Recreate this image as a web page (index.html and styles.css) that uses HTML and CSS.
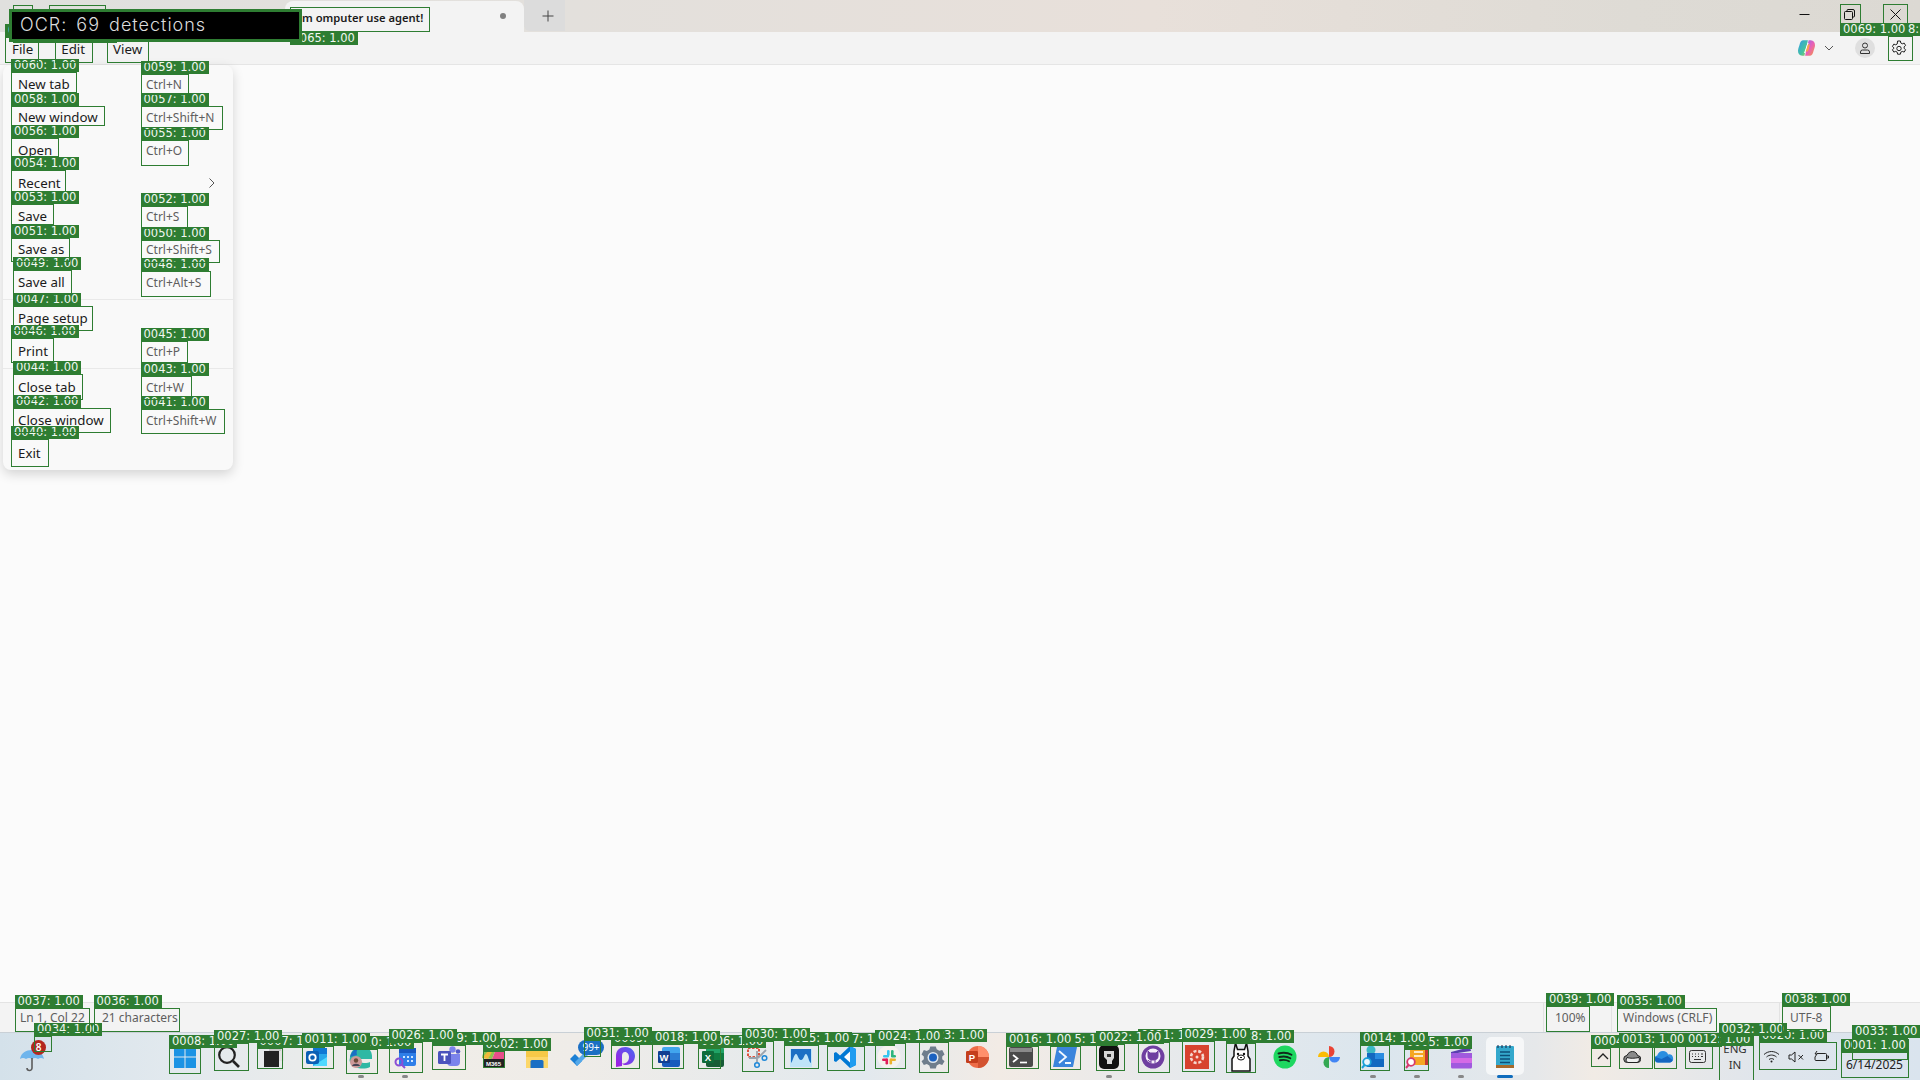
FILE: index.html
```html
<!DOCTYPE html>
<html lang="en">
<head>
<meta charset="utf-8">
<title>Notepad</title>
<link rel="stylesheet" href="styles.css">
</head>
<body>
<div class="app">
  <header class="titlebar">
    <div class="tab"><span class="tab-title">m omputer use agent!</span><span class="tab-dot"></span></div>
    <div class="newtab"><svg width="12" height="12" viewBox="0 0 12 12"><path d="M6 .5v11M.5 6h11" stroke="#444" fill="none"/></svg></div>
    <div class="winctrls">
      <span class="winbtn"><svg width="11" height="11" viewBox="0 0 11 11"><path d="M.5 5.5h10" stroke="#111" fill="none"/></svg></span>
      <span class="winbtn"><svg width="11" height="11" viewBox="0 0 11 11"><path d="M3 2V1.500A1 1 0 0 1 4 .5h5A1.500 1.500 0 0 1 10.500 2v5a1 1 0 0 1-1 1H9M1.500 2.500h6a1 1 0 0 1 1 1v6a1 1 0 0 1-1 1h-6a1 1 0 0 1-1-1v-6a1 1 0 0 1 1-1z" stroke="#111" fill="none"/></svg></span>
      <span class="winbtn"><svg width="11" height="11" viewBox="0 0 11 11"><path d="M.5.5l10 10M10.500.5l-10 10" stroke="#111" fill="none"/></svg></span>
    </div>
  </header>
  <nav class="menubar">
    <span class="menu-item">File</span><span class="menu-item">Edit</span><span class="menu-item">View</span>
    <div class="toolbar">
      <svg class="copilot" width="17" height="16" viewBox="0 0 24 22"><defs><linearGradient id="cpa" x1="0" y1="0" x2="1" y2="1"><stop offset="0" stop-color="#2f9be8"/><stop offset=".6" stop-color="#45c2a0"/><stop offset="1" stop-color="#b6d34a"/></linearGradient><linearGradient id="cpb" x1="0" y1="0" x2="1" y2="1"><stop offset="0" stop-color="#8a6cf0"/><stop offset=".5" stop-color="#e85fb8"/><stop offset="1" stop-color="#f59a3c"/></linearGradient></defs><path d="M7 0h7L9 22H6C2 22 0 19 0 15c0-2 1-5 2-8 1-4 2-7 5-7z" fill="url(#cpa)"/><path d="M17 22h-7L15 0h3c4 0 6 3 6 7 0 2-1 5-2 8-1 4-2 7-5 7z" fill="url(#cpb)"/><path d="M15 4l-5 14h-1.500l5-14z" fill="#fff"/><path d="M14 6l-3 10h3l3-10z" fill="#f7a34a"/></svg>
      <svg class="chev" width="10" height="6" viewBox="0 0 10 6"><path d="M1 1l4 4 4-4" stroke="#555" fill="none"/></svg>
      <span class="avatar"><svg width="12" height="12" viewBox="0 0 12 12"><circle cx="6" cy="3.500" r="2.500" stroke="#333" fill="none"/><path d="M1.500 11.500V10a2 2 0 0 1 2-2h5a2 2 0 0 1 2 2v1.500z" stroke="#333" fill="none"/></svg></span>
      <svg class="gear" width="16" height="16" viewBox="0 0 16 16"><path d="M6.600 1h2.800l.4 2 1.500.8 1.900-.7 1.400 2.400-1.500 1.300v1.600l1.500 1.300-1.400 2.400-1.900-.7-1.500.8-.4 2H6.600l-.4-2-1.500-.8-1.900.7-1.400-2.400 1.500-1.300V7.800L1.400 6.500l1.400-2.400 1.900.7 1.500-.8z" stroke="#222" fill="none"/><circle cx="8" cy="8.500" r="2.200" stroke="#222" fill="none"/></svg>
    </div>
  </nav>
  <main class="editor">
    <div class="filemenu">
      <div class="row"><span>New tab</span><span class="key">Ctrl+N</span></div>
      <div class="row"><span>New window</span><span class="key">Ctrl+Shift+N</span></div>
      <div class="row"><span>Open</span><span class="key">Ctrl+O</span></div>
      <div class="row"><span>Recent</span><span class="arrow"><svg width="6" height="10" viewBox="0 0 6 10"><path d="M.5.500l4.500 4.500-4.500 4.500" stroke="#555" fill="none"/></svg></span></div>
      <div class="row"><span>Save</span><span class="key">Ctrl+S</span></div>
      <div class="row"><span>Save as</span><span class="key">Ctrl+Shift+S</span></div>
      <div class="row"><span>Save all</span><span class="key">Ctrl+Alt+S</span></div>
      <div class="sep"></div>
      <div class="row"><span>Page setup</span></div>
      <div class="row"><span>Print</span><span class="key">Ctrl+P</span></div>
      <div class="sep"></div>
      <div class="row"><span>Close tab</span><span class="key">Ctrl+W</span></div>
      <div class="row"><span>Close window</span><span class="key">Ctrl+Shift+W</span></div>
      <div class="row"><span>Exit</span></div>
    </div>
  </main>
  <footer class="statusbar">
    <span class="st st-ln">Ln 1, Col 22</span><span class="st st-ch">21 characters</span>
    <span class="st st-zoom">100%</span><span class="st st-eol">Windows (CRLF)</span><span class="st st-enc">UTF-8</span>
  </footer>
  <footer class="taskbar">
    <div class="weather">
      <svg width="26" height="28" viewBox="0 0 26 28"><path d="M1 14C2 8 7 5 13 5s11 3 12 9c-2-1.500-4-1.500-6 0-2-1.500-4-1.500-6 0-2-1.500-4-1.500-6 0-2-1.500-4-1.500-6 0z" fill="#6fb5ec"/><path d="M13 13v10a2.500 2.500 0 0 1-5 0" stroke="#5c5c5c" stroke-width="1.600" fill="none"/></svg>
      <span class="wbadge">8</span>
    </div>
    <div class="apps">
      <span class="ti"><svg viewBox="0 0 24 24"><path d="M1 1h10.500v10.500H1zM12.500 1H23v10.500H12.500zM1 12.500h10.500V23H1zM12.500 12.500H23V23H12.500z" fill="#1b93e4"/></svg></span>
      <span class="ti"><svg viewBox="0 0 24 24"><circle cx="10" cy="10" r="7.800" fill="none" stroke="#222" stroke-width="2.200"/><path d="M16 16l6 6" stroke="#222" stroke-width="2.600"/></svg></span>
      <span class="ti"><svg viewBox="0 0 24 24"><path d="M8 2h15v14H8z" fill="#e2e2e2"/><path d="M3 6h15v16H3z" fill="#222"/><path d="M8 2h12v4H8z" fill="#c8c8c8"/></svg></span>
      <span class="ti"><svg viewBox="0 0 24 24"><path d="M8 3h14v18H8z" fill="#28a8ea"/><path d="M8 3h14v6H8z" fill="#0f78d4"/><path d="M8 21l14-9v9z" fill="#50d9ff"/><rect x="1" y="6" width="13" height="13" rx="2" fill="#0a5fb4"/><circle cx="7.500" cy="12.500" r="3.200" fill="none" stroke="#fff" stroke-width="1.800"/></svg></span>
      <span class="ti dot"><svg viewBox="0 0 24 24"><path d="M1 12C2 5 7 1 13 1c6 0 10 5 10 10v3H8c1 4 9 5 13 3v5c-6 3-16 2-20-5-1-2 0-3 0-5z" fill="#2fb8a4"/><path d="M1 12C3 5 8 2 13 2c-5 1-6 4-5 8z" fill="#1b6fc4"/><circle cx="7" cy="17" r="6" fill="#c99"/><circle cx="7" cy="15.500" r="2.200" fill="#6a4a38"/><path d="M3 21c1-3 7-3 8 0z" fill="#445"/></svg></span>
      <span class="ti dot"><svg viewBox="0 0 24 24"><rect x="6" y="3" width="17" height="18" rx="2" fill="#2f7ee8"/><path d="M6 3h17v5H6z" fill="#1857c0"/><path d="M10 11h2v2h-2zM14 11h2v2h-2zM18 11h2v2h-2zM14 15h2v2h-2zM18 15h2v2h-2z" fill="#cfe6ff"/><circle cx="6" cy="17" r="3.500" fill="none" stroke="#8a4fd6" stroke-width="2"/><path d="M8.500 19.500L12 23" stroke="#8a4fd6" stroke-width="2"/></svg></span>
      <span class="ti"><svg viewBox="0 0 24 24"><circle cx="15.500" cy="4.500" r="3.200" fill="#7b83eb"/><circle cx="21" cy="6.500" r="2.300" fill="#5059c9"/><path d="M10 9h13v8a4 4 0 0 1-4 4h-5a4 4 0 0 1-4-4z" fill="#7b83eb"/><rect x="1" y="6" width="13" height="13" rx="1.500" fill="#4b53bc"/><path d="M4 9.500h7M7.500 9.500v6.500" stroke="#fff" stroke-width="1.800"/></svg></span>
      <span class="ti"><svg viewBox="0 0 24 24"><path d="M1 13C2 5 6 2 11 2h5l-5 12z" fill="#8cc84b"/><path d="M11 14l5-12h3c2 0 4 2 4 5v7z" fill="#e84e8a"/><path d="M1 13l8-9 3 1-5 9z" fill="#f0b93a"/><rect x="2" y="14" width="21" height="8" fill="#222"/><text class="m365" x="12.500" y="20.500" text-anchor="middle">M365</text></svg></span>
      <span class="ti"><svg viewBox="0 0 24 24"><path d="M1 3h22v20H1z" fill="#fcd769"/><path d="M1 3h22v9H1z" fill="#f6c948"/><path d="M7 15h10a1.500 1.500 0 0 1 1.500 1.500V23h-13v-6.500A1.500 1.500 0 0 1 7 15z" fill="#1b6fc4"/></svg></span>
      <span class="ti todo"><svg viewBox="0 0 24 24"><path d="M1 14l5-5 7 7-5 5z" fill="#1b7fd4"/><path d="M8 21L22 7l-3-3L6 17z" fill="#55a9ea"/></svg><span class="nbadge">99+</span></span>
      <span class="ti"><svg viewBox="0 0 24 24"><defs><linearGradient id="lp" x1="0" y1="1" x2="1" y2="0"><stop offset="0" stop-color="#a51ae0"/><stop offset="1" stop-color="#4868f2"/></linearGradient></defs><path d="M3 22V11C3 5 7 2 12.500 2 18 2 22 6 22 11c0 5-4 9-9 9-2 0-3-.5-4-1.500 2 .5 7-.5 7-6.500 0-2.500-1.500-5-4-5-2 0-3 1.500-3 4v10z" fill="url(#lp)"/></svg></span>
      <span class="ti"><svg viewBox="0 0 24 24"><path d="M7 2h14a2 2 0 0 1 2 2v4H5V4a2 2 0 0 1 2-2z" fill="#41a5ee"/><path d="M5 8h18v7H5z" fill="#2b7cd3"/><path d="M5 15h18v5a2 2 0 0 1-2 2H7a2 2 0 0 1-2-2z" fill="#185abd"/><rect x="1" y="6" width="12" height="12" rx="1" fill="#103f91"/><text class="ltr" x="7" y="15.500" text-anchor="middle">W</text></svg></span>
      <span class="ti"><svg viewBox="0 0 24 24"><path d="M7 2h14a2 2 0 0 1 2 2v4H5V4a2 2 0 0 1 2-2z" fill="#21a366"/><path d="M5 8h18v7H5z" fill="#107c41"/><path d="M5 15h18v5a2 2 0 0 1-2 2H7a2 2 0 0 1-2-2z" fill="#185c37"/><rect x="1" y="6" width="12" height="12" rx="1" fill="#0f6b3a"/><text class="ltr" x="7" y="15.500" text-anchor="middle">X</text></svg></span>
      <span class="ti"><svg viewBox="0 0 24 24"><path d="M3 3h11v9H3z" fill="none" stroke="#e0523c" stroke-width="2" stroke-dasharray="2.500 1.500"/><path d="M12 6v11M13 13l8-8M12 13H4" stroke="#9aa3ad" stroke-width="1.800"/><circle cx="19.500" cy="13" r="2.300" fill="none" stroke="#1e88d8" stroke-width="1.500"/><circle cx="12" cy="20" r="2.300" fill="none" stroke="#1e88d8" stroke-width="1.500"/></svg></span>
      <span class="ti"><svg viewBox="0 0 24 24"><path d="M1 4h22v18H1z" fill="#bfe4f8"/><path d="M2 4h20v14c-2 0-3-9-5-9s-2 6-5 6-3-6-5-6-3 7-5 9z" fill="#1b6fc4"/></svg></span>
      <span class="ti"><svg viewBox="0 0 24 24"><path d="M17 1l6 3v16l-6 3L7 13.500 3 17l-2-1V8l2-1 4 3.500z" fill="#0078d4"/><path d="M17 6.500L11 12l6 5.500z" fill="#f7fbff"/><path d="M17 1l6 3v16l-6 3z" fill="#1f9cf0"/></svg></span>
      <span class="ti"><svg viewBox="0 0 24 24"><circle cx="12" cy="12" r="11.500" fill="#f5f2ee"/><rect x="10" y="5" width="2.600" height="6" rx="1.300" fill="#36c5f0"/><rect x="6" y="10" width="6" height="2.600" rx="1.300" fill="#36c5f0"/><rect x="14" y="5" width="2.600" height="7" rx="1.300" fill="#2eb67d"/><rect x="14" y="10" width="5" height="2.600" rx="1.300" fill="#2eb67d"/><rect x="12.500" y="13.500" width="2.600" height="6" rx="1.300" fill="#ecb22e"/><rect x="13" y="13.500" width="6" height="2.600" rx="1.300" fill="#ecb22e"/><rect x="5" y="13.500" width="6" height="2.600" rx="1.300" fill="#e01e5a"/><rect x="8.500" y="13.500" width="2.600" height="6" rx="1.300" fill="#e01e5a"/></svg></span>
      <span class="ti"><svg viewBox="0 0 24 24"><path d="M9 1h6l1 3.200 2.800 1.600 3.200-.9 2.500 5-2.500 2.100v3l2.500 2.100-2.500 4-3.200-.9-2.800 1.600L15 25H9l-1-3.200-2.800-1.600-3.200.9L-.5 17 2 15v-3L-.5 9.900 2 5l3.200.9L8 4.300z" fill="#6e7d8c" transform="translate(1 .5) scale(.92)"/><circle cx="12" cy="12.500" r="5.500" fill="#dfe7ee"/><circle cx="12" cy="12.500" r="4" fill="#1b62c0"/></svg></span>
      <span class="ti"><svg viewBox="0 0 24 24"><circle cx="13" cy="12" r="11" fill="#ed6c47"/><path d="M13 1a11 11 0 0 1 11 11H13z" fill="#ff8f6b"/><path d="M13 12h11a11 11 0 0 1-11 11z" fill="#d35230"/><rect x="1" y="6" width="12" height="12" rx="1.200" fill="#c43e1c"/><text class="ltr" x="7" y="15.500" text-anchor="middle">P</text></svg></span>
      <span class="ti"><svg viewBox="0 0 24 24"><rect x="0" y="2" width="24" height="20" rx="2" fill="#4a4a4a"/><path d="M1 3h22v4H1z" fill="#8a8a8a"/><path d="M4 10l4.500 3.500L4 17" stroke="#fff" stroke-width="1.700" fill="none"/><path d="M11 17.500h7" stroke="#fff" stroke-width="1.700"/></svg></span>
      <span class="ti"><svg viewBox="0 0 24 24"><path d="M4 2h20l-4 20H0z" fill="#3a84dc"/><path d="M6 6l7 6-7 6M12 18h6" stroke="#f2f8ff" stroke-width="1.800" fill="none"/></svg></span>
      <span class="ti dot"><svg viewBox="0 0 24 24"><rect x="2" y="0" width="20" height="24" rx="5" fill="#111"/><path d="M7 6h10v7l-2 3v3h-5v-4L7 12z" fill="#d8d8d8"/><path d="M10 9h4v3h-4z" fill="#333"/></svg></span>
      <span class="ti"><svg viewBox="0 0 24 24"><circle cx="12" cy="12" r="11.500" fill="#6f3fa0"/><circle cx="12" cy="11" r="7.500" fill="#f6f0fa"/><path d="M7 6l2 2h6l2-2v5c0 3-2 4-5 4s-5-1-5-4zM10 15v3M14 15v3M7 15c1 2 2 2 3 2" fill="#6f3fa0" stroke="#6f3fa0"/></svg></span>
      <span class="ti"><svg viewBox="0 0 24 24"><rect x="0" y="0" width="24" height="24" fill="#d7432e"/><circle cx="12" cy="12" r="6" fill="none" stroke="#f6d8cf" stroke-width="2.600" stroke-dasharray="3 1.800"/><circle cx="12" cy="12" r="1.500" fill="#f6d8cf"/></svg></span>
      <span class="ti"><svg viewBox="0 0 24 30" class="tall"><path d="M6.500 1l2 6.500h7l2-6.500 1.500 8v5l2 3v12H3V17l2-3V9z" fill="#fff" stroke="#111" stroke-width="1.500"/><circle cx="9" cy="12" r="1.200" fill="#111"/><circle cx="15" cy="12" r="1.200" fill="#111"/><ellipse cx="12" cy="15.500" rx="3.500" ry="2.500" fill="none" stroke="#111"/><path d="M11 15h2v1h-2z" fill="#111"/></svg></span>
      <span class="ti"><svg viewBox="0 0 24 24"><circle cx="12" cy="12" r="11.500" fill="#1ed760"/><path d="M5.500 8.500c4-1 9-1 13 1.300M6.300 12c3.500-.8 8-.6 11 1.200M7 15.300c3-.6 6.500-.5 9 1" stroke="#10291a" stroke-width="1.900" fill="none" stroke-linecap="round"/></svg></span>
      <span class="ti"><svg viewBox="0 0 24 24"><path d="M12 12V1a5.500 5.500 0 0 1 0 11z" fill="#ea4335"/><path d="M12 12V1a5.500 5.500 0 0 1 0 11z" fill="#4285f4" transform="rotate(90 12 12)"/><path d="M12 12V1a5.500 5.500 0 0 1 0 11z" fill="#34a853" transform="rotate(180 12 12)"/><path d="M12 12V1a5.500 5.500 0 0 1 0 11z" fill="#fbbc04" transform="rotate(270 12 12)"/></svg></span>
      <span class="ti dot"><svg viewBox="0 0 24 24"><circle cx="10" cy="5" r="4.500" fill="#3bb8c4"/><path d="M6 8h17v14H6z" fill="#1268c0"/><path d="M14 8h9v6h-9z" fill="#2a8ce0"/><circle cx="6" cy="17" r="3.800" fill="#e8f6ff" stroke="#18a0d8" stroke-width="1.800"/><path d="M3.500 20L1 23" stroke="#18a0d8" stroke-width="2"/></svg></span>
      <span class="ti dot"><svg viewBox="0 0 24 24"><path d="M5 2h17v18H5z" fill="#f5a623"/><path d="M20 2h3v18h-3z" fill="#c43a30"/><path d="M9 7h9M9 11h9" stroke="#fff" stroke-width="1.300"/><circle cx="6" cy="17" r="3.800" fill="#fff" stroke="#d6396e" stroke-width="1.800"/><path d="M3.500 20L1 23" stroke="#d6396e" stroke-width="2"/></svg></span>
      <span class="ti dot"><svg viewBox="0 0 24 24"><path d="M2 7L21 2l1 4-20 3z" fill="#5a3fb0"/><path d="M2 8h21v14a1.500 1.500 0 0 1-1.500 1.500h-18A1.500 1.500 0 0 1 2 22z" fill="#a05ade"/><path d="M2 13h21v5H2z" fill="#d56ae6"/></svg></span>
      <span class="ti active"><svg viewBox="0 0 24 24"><path d="M4 1h16a1 1 0 0 1 1 1v18H3V2a1 1 0 0 1 1-1z" fill="#34a8cc"/><path d="M5 0v3M9 0v3M13 0v3M17 0v3" stroke="#124" stroke-width="1"/><path d="M7 7h10M7 10.500h10M7 14h10M7 17.500h10" stroke="#0c4f78" stroke-width="1.400"/><path d="M3 20h18v3H3z" fill="#a56a2c"/></svg></span>
    </div>
    <div class="tray">
      <span class="tr tr-up"><svg width="12" height="7" viewBox="0 0 12 7"><path d="M1 6l5-5 5 5" stroke="#222" stroke-width="1.300" fill="none"/></svg></span>
      <span class="tr tr-cloud"><svg width="18" height="12" viewBox="0 0 18 12"><path d="M4.500 11.500a3.500 3.500 0 0 1-.5-7C5 2 7 .5 9.500.5c2.800 0 4.500 2 5 4a3.500 3.500 0 0 1-.5 7z" fill="#8a8a8a" stroke="#222"/><path d="M4.500 11.500a3.500 3.500 0 0 1-.5-5c3 1 7 1 12 0a3.500 3.500 0 0 1-2 5z" fill="#f0f0f0" stroke="#222"/></svg></span>
      <span class="tr tr-od"><svg width="20" height="13" viewBox="0 0 20 13"><path d="M4 12.500a3.500 3.500 0 0 1-.8-6.900C4 3 6 1 9 1c2.500 0 4.500 1.500 5 3.500a4 4 0 0 1 2 8z" fill="#2a8ee0"/><path d="M4 12.500a3.500 3.500 0 0 1-2.500-5.500l6 2 6-3 5 4c-.3 1.500-1.300 2.500-2.500 2.500z" fill="#1565c0"/></svg></span>
      <span class="tr tr-kb"><svg width="17" height="13" viewBox="0 0 17 13"><rect x=".5" y=".5" width="16" height="12" rx="2" fill="none" stroke="#333"/><path d="M3 4h1M6 4h1M9 4h1M12 4h2M3 6.500h1M6 6.500h1M9 6.500h1M12 6.500h2M5 9.500h7" stroke="#333"/></svg></span>
      <span class="lang">ENG<br>IN</span>
      <span class="tr tr-wifi"><svg width="17" height="13" viewBox="0 0 17 13"><path d="M1 4.500c4.500-4 10.500-4 15 0M3.500 7c3-2.600 7-2.600 10 0M6 9.500c1.500-1.200 3.500-1.200 5 0" stroke="#222" fill="none"/><circle cx="8.500" cy="11.500" r="1" fill="#222"/></svg></span>
      <span class="tr tr-vol"><svg width="17" height="12" viewBox="0 0 17 12"><path d="M1 4h2.500L7 1v10L3.500 8H1z" stroke="#222" fill="none"/><path d="M10.500 4l4.500 4.500M15 4l-4.500 4.500" stroke="#222" fill="none"/></svg></span>
      <span class="tr tr-bat"><svg width="17" height="12" viewBox="0 0 17 12"><path d="M4 2.500h8.500a1 1 0 0 1 1 1v5a1 1 0 0 1-1 1H3a1 1 0 0 1-1-1V6M14 5h1.500v2H14" stroke="#222" fill="none"/><path d="M4 0L2 3h2l-2 3" stroke="#222" fill="none"/></svg></span>
      <span class="date">6/14/2025</span>
    </div>
  </footer>
  <div class="overlay" id="overlay"></div>
  <div class="banner">OCR: 69 detections</div>
</div>
<script src="overlay.js"></script>
</body>
</html>
```
FILE: styles.css
```css
* { box-sizing: border-box; }
html, body { margin: 0; height: 100%; overflow: hidden; }
body { font-family: "Noto Sans", "Open Sans", sans-serif; font-size: 13.3px; color: #1b1b1b; background: #fbfbfb; }
.app { position: relative; display: flex; flex-direction: column; width: 1920px; height: 1080px; }

.titlebar { display: flex; height: 32px; flex: none; padding-left: 285px; background: linear-gradient(90deg, #e0e0de 0%, #e3e0dc 30%, #e8e0da 60%, #dedbd5 85%, #dcd9d3 100%); }
.tab { width: 239px; height: 31px; margin-top: 1px; padding: 0 18px 0 17px; display: flex; align-items: center; justify-content: space-between; background: #f3f3f3; border-radius: 8px 8px 0 0; }
.tab-title { font-size: 11.2px; font-weight: 600; color: #1b1b1b; padding-top: 1px; }
.tab-dot { width: 6px; height: 6px; border-radius: 50%; background: #808080; margin-bottom: 1px; }
.newtab { width: 41px; height: 31px; display: flex; align-items: center; justify-content: center; padding-left: 7px; background: #dcdcdc; border-radius: 0 0 0 6px; }
.winctrls { display: flex; margin-left: auto; padding-right: 2px; padding-bottom: 4px; }
.winbtn { width: 45.500px; display: flex; align-items: center; justify-content: center; }

.menubar { display: flex; align-items: center; gap: 28px; height: 33px; flex: none; padding: 0 0 0 12px; background: #f3f3f3; border-bottom: 1px solid #e5e5e5; }
.menu-item { line-height: 33px; padding-top: 2px; }
.toolbar { margin-left: auto; display: flex; align-items: center; padding-right: 13px; }
.copilot { margin-right: 9px; }
.chev { margin-right: 21px; }
.avatar { width: 20px; height: 20px; border-radius: 50%; background: #dfdfdf; display: flex; align-items: center; justify-content: center; margin-right: 16px; }

.editor { flex: 1; position: relative; background: #fbfbfb; }
.filemenu { position: absolute; left: 3px; top: 0; width: 230px; height: 405px; padding: 3px 0 1px; background: #f9f9f9; border-radius: 8px; box-shadow: 0 4px 12px rgba(0,0,0,.16); }
.row { display: grid; grid-template-columns: 125px 1fr; align-items: center; height: 33px; padding-left: 15px; line-height: 33px; }
.key { font-size: 12px; color: #5e5e5e; padding-left: 3px; }
.arrow { justify-self: end; padding: 0 18px 2px 0; display: flex; align-items: center; }
.sep { height: 1px; margin: 0 0 2px; background: #e9e9e9; }

.statusbar { display: flex; align-items: center; height: 30px; flex: none; background: #f3f3f3; border-top: 1px solid #e3e3e3; font-size: 12px; color: #5e5e5e; }
.st { height: 100%; display: flex; align-items: center; }
.st-ln { width: 102px; padding-left: 20px; }
.st-ch { width: 1441px; }
.st-zoom { width: 68px; padding-left: 11px; border-left: 1px solid #e3e3e3; }
.st-eol { width: 168px; padding-left: 11px; border-left: 1px solid #e3e3e3; }
.st-enc { flex: 1; padding-left: 10px; border-left: 1px solid #e3e3e3; }

.taskbar { display: flex; align-items: center; height: 48px; flex: none; background: linear-gradient(90deg, #d4e1ea 0%, #e2e9ee 9%, #f0ede8 22%, #efece8 30%, #e2e9ee 45%, #f2ebe5 52%, #e6e9ec 62%, #dbe6ee 72%, #e6e8ea 80%, #f1ebe5 83%, #dfe5ec 92%, #dae4ee 100%); border-top: 1px solid #c9d0d6; }
.weather { position: relative; width: 163px; flex: none; height: 100%; padding: 12px 0 0 19px; }
.wbadge { position: absolute; left: 31px; top: 7px; width: 15px; height: 15px; border-radius: 50%; background: #b3261e; color: #fff; font-size: 10px; font-weight: 600; text-align: center; line-height: 15px; }
.apps { display: flex; flex: none; height: 100%; }
.ti { position: relative; width: 44px; height: 100%; display: flex; align-items: center; justify-content: center; padding-top: 1px; }
.ti > svg { width: 24px; height: 24px; }
.ti > svg.tall { height: 30px; }
.dot::after { content: ""; position: absolute; left: 19px; bottom: 2px; width: 6px; height: 3px; border-radius: 2px; background: #888; }
.active::before { content: ""; position: absolute; left: 3px; top: 4px; width: 38px; height: 38px; border-radius: 5px; background: rgba(255,255,255,.65); }
.active > svg { position: relative; }
.active::after { content: ""; position: absolute; left: 14px; bottom: 2px; width: 16px; height: 3px; border-radius: 2px; background: #0f6cbd; }
.nbadge { position: absolute; left: 19px; top: 7px; width: 26px; height: 15px; border-radius: 8px; background: #1b6fc4; color: #fff; font-size: 10px; text-align: center; line-height: 15px; }
.m365 { font: 700 6px "Liberation Sans", sans-serif; fill: #fff; }
.ltr { font: 700 9.500px "Liberation Sans", sans-serif; fill: #fff; }

.tray { display: flex; align-items: center; flex: 1; height: 100%; padding-left: 64px; font-size: 12px; }
.tr { display: flex; align-items: center; justify-content: center; }
.tr-up { width: 24px; }
.tr-cloud { width: 36px; margin-left: -1px; }
.tr-od { width: 24px; margin-left: 2px; }
.tr-kb { width: 32px; margin-left: 5px; }
.lang { width: 38px; margin-left: 3px; text-align: center; line-height: 16px; color: #333; font-size: 11.500px; }
.tr-wifi { width: 24px; margin-left: 5px; }
.tr-vol { width: 24px; margin-left: 1px; }
.tr-bat { width: 24px; margin-left: 1px; }
.date { margin-left: 13px; padding-top: 15px; color: #222; }

.overlay { position: absolute; inset: 0; overflow: hidden; pointer-events: none; }
.det { position: absolute; border: 1px solid #2e7d32; }
.lab { position: absolute; width: 68px; height: 13px; padding-left: 3px; background: #2e7d32; color: #f2f7f2; font: 11.5px/13px "DejaVu Sans", sans-serif; white-space: nowrap; }
.banner { position: absolute; left: 9px; top: 9px; width: 293px; height: 33px; padding: 2px 0 0 8px; border: 3px solid #2e7d32; background: #000; color: #dcdcdc; font: 300 18px/22px "Inter", sans-serif; letter-spacing: 1px; word-spacing: 3px; white-space: nowrap; }
```
FILE: overlay.js
```js
// [id, left, top, right, bottom, labelTop (default: directly above the box)]
var D = [
[1,1840.5,1052,1909,1078],[2,482.5,1051,504.5,1068],[3,1654,1047,1677,1069],[4,1591,1048,1611,1066.5],
[5,1403.5,1049,1428.5,1071],[6,698,1048,720.5,1069],[7,256.5,1048,282.5,1069],[8,169,1048,200.5,1074],
[9,611,1045,639.5,1069],[10,346,1049,377.5,1074],[11,301.5,1046,333.5,1069],[12,1685,1046,1713,1069],
[13,1619,1046,1652.5,1069],[14,1360,1045,1390,1071],[15,1049.5,1046,1080.5,1069.5],[16,1006,1046,1039,1069],
[17,827,1046,865,1071],[18,652,1044,683.5,1069],[19,431.5,1045,465.5,1069.5],[20,1759,1042,1836.5,1069.5],
[21,1138,1042,1170,1073],[22,1096,1044,1125,1071],[23,919,1042,948.5,1073],[24,875,1043,906,1069],
[25,784,1045,818.5,1069],[26,388.5,1042,422.5,1073],[27,214,1042.5,248.5,1071],[28,1226,1043,1256,1073],
[29,1181.5,1041,1214.5,1072],[30,742,1041,773.5,1072],[31,583.5,1040,600.5,1057],[32,1718.5,1036,1754,1090],
[33,1852,1038,1907.5,1060],[34,34,1035.5,51.5,1052],[35,1616.5,1008,1716.5,1032],[36,93.5,1007.5,179.5,1032],
[37,14.5,1007.5,90,1032],[38,1781.5,1006,1830.5,1032],[39,1546,1006,1589.5,1032],
[40,11,439,48.5,466.5],[41,140.5,409,224.5,434],[42,13,408,110.5,433],[43,140.5,376,191.5,400],
[44,13,374,83,400],[45,140.5,341,188,363],[46,10.5,338,54,363],[47,13,306,92.5,331],
[48,140.5,271,210.5,296.5],[49,13,270,71.5,295],[50,140.5,240,219.5,263],[51,11,238,69.5,262],
[52,140.5,206,188,229],[53,11,204,54,225],[54,11,170,66,192],[55,140.5,140,188.5,166],
[56,11,138,59,157],[57,140.5,106,222.5,130],[58,11,105.5,104.5,126],[59,140.5,74,189,95],
[60,11,72,77,93],[61,107,37,149,63],[62,55,37,93,63],[63,5,37,39,63],
[64,49,5,106,30,30],[65,289.5,7,429.5,31.5,32],[66,13,5,33,30,30],[67,1888,36,1913,61],
[68,1883,4,1908,24,23],[69,1840,4,1861,24,23]
];
var root = document.getElementById('overlay');
D.forEach(function (d) {
  var box = document.createElement('div');
  box.className = 'det';
  box.style.left = d[1] + 'px';
  box.style.top = d[2] + 'px';
  box.style.width = (d[3] - d[1]) + 'px';
  box.style.height = (d[4] - d[2]) + 'px';
  var lab = document.createElement('div');
  lab.className = 'lab';
  lab.style.left = d[1] + 'px';
  lab.style.top = (d.length > 5 ? d[5] : d[2] - 13) + 'px';
  lab.textContent = ('000' + d[0]).slice(-4) + ': 1.00';
  root.appendChild(box);
  root.appendChild(lab);
});
```
